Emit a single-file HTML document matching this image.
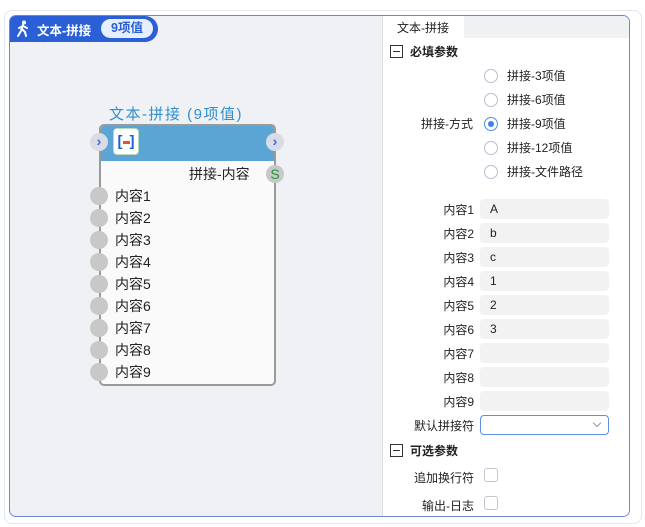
<!DOCTYPE html>
<html><head><meta charset="utf-8"><style>
*{box-sizing:border-box;margin:0;padding:0}
body{width:645px;height:527px;background:#fff;font-family:"Liberation Sans","Noto Sans CJK SC",sans-serif;position:relative;overflow:hidden;font-size:13px;color:#222}
.abs{position:absolute}
.outer{left:4px;top:10px;width:638px;height:514px;border:1px solid #e3e6f3;border-radius:8px}
.frame{left:9px;top:15px;width:621px;height:502px;border:1px solid #6d86d6;border-radius:7px;overflow:hidden;background:#f0f1f4}
.right{left:372px;top:0;width:249px;height:502px;background:#fff;border-left:1px solid #ddd}
.lbl{position:absolute;text-align:right;width:90px;font-size:12px}
.inp{position:absolute;left:97px;width:129px;height:20px;background:#f2f2f2;border-radius:4px;font-size:12px;padding-left:10px;line-height:20px}
.radio{position:absolute;left:101px;width:14px;height:14px;border:1px solid #b8bccc;border-radius:50%;background:#fff}
.rt{position:absolute;left:124px;font-size:12px}
.port{position:absolute;left:90px;width:18px;height:18px;border-radius:50%;background:#c8c8c8}
.pt{position:absolute;left:115px;font-size:14px}
</style></head><body>
<div class="abs outer"></div>
<div class="abs frame">
 <div class="abs right">
  <div class="abs" style="left:0;top:0;width:249px;height:22px;background:#f0f1f3"></div>
  <div class="abs" style="left:0;top:0;width:81px;height:22px;background:#fff;font-size:12px;padding:3px 0 0 14px">文本-拼接</div>
  <div class="abs" style="left:7px;top:29px;width:13px;height:13px;border:1px solid #333;"><div style="position:absolute;left:2px;top:5px;width:7px;height:1px;background:#333"></div></div>
  <div class="abs" style="left:27px;top:27px;font-size:12px;font-weight:bold">必填参数</div>
  <div class="radio" style="top:53px"></div><div class="rt" style="top:51px">拼接-3项值</div>
  <div class="radio" style="top:77px"></div><div class="rt" style="top:75px">拼接-6项值</div>
  <div class="radio" style="top:101px;border-color:#4a8ff0"><div style="position:absolute;left:3px;top:3px;width:6px;height:6px;border-radius:50%;background:#3b82f0"></div></div><div class="rt" style="top:99px">拼接-9项值</div>
  <div class="radio" style="top:125px"></div><div class="rt" style="top:123px">拼接-12项值</div>
  <div class="radio" style="top:149px"></div><div class="rt" style="top:147px">拼接-文件路径</div>
  <div class="lbl" style="left:0;top:99px">拼接-方式</div>
  <div class="lbl" style="left:1px;top:185px">内容1</div><div class="inp" style="top:183px">A</div>
  <div class="lbl" style="left:1px;top:209px">内容2</div><div class="inp" style="top:207px">b</div>
  <div class="lbl" style="left:1px;top:233px">内容3</div><div class="inp" style="top:231px">c</div>
  <div class="lbl" style="left:1px;top:257px">内容4</div><div class="inp" style="top:255px">1</div>
  <div class="lbl" style="left:1px;top:281px">内容5</div><div class="inp" style="top:279px">2</div>
  <div class="lbl" style="left:1px;top:305px">内容6</div><div class="inp" style="top:303px">3</div>
  <div class="lbl" style="left:1px;top:329px">内容7</div><div class="inp" style="top:327px"></div>
  <div class="lbl" style="left:1px;top:353px">内容8</div><div class="inp" style="top:351px"></div>
  <div class="lbl" style="left:1px;top:377px">内容9</div><div class="inp" style="top:375px"></div>
  <div class="lbl" style="left:1px;top:401px">默认拼接符</div>
  <div class="abs" style="left:97px;top:399px;width:129px;height:20px;border:1px solid #5b8fe8;border-radius:4px;background:#fff"><div style="position:absolute;right:8px;top:4px;width:6px;height:6px;border-right:1px solid #999;border-bottom:1px solid #999;transform:rotate(45deg)"></div></div>
  <div class="abs" style="left:7px;top:428px;width:13px;height:13px;border:1px solid #333;"><div style="position:absolute;left:2px;top:5px;width:7px;height:1px;background:#333"></div></div>
  <div class="abs" style="left:27px;top:426px;font-size:12px;font-weight:bold">可选参数</div>
  <div class="lbl" style="left:1px;top:453px">追加换行符</div>
  <div class="abs" style="left:101px;top:452px;width:14px;height:14px;border:1px solid #c4c6cf;border-radius:3px"></div>
  <div class="lbl" style="left:1px;top:481px">输出-日志</div>
  <div class="abs" style="left:101px;top:480px;width:14px;height:14px;border:1px solid #c4c6cf;border-radius:3px"></div>
 </div>
</div>
<div class="abs" style="left:10px;top:16px;width:148px;height:26px;background:#2a5fd6;border-radius:6px 14px 14px 0"></div>
<svg class="abs" style="left:15px;top:20px" width="16" height="18" viewBox="0 0 16 18"><circle cx="9" cy="2.5" r="2" fill="#fff"/><path d="M8 5 L6 11 L3 16 M7 9 L10 12 L11 16 M8 6 L12 8 M8 6 L4 8" stroke="#fff" stroke-width="2" fill="none" stroke-linecap="round"/></svg>
<div class="abs" style="left:37px;top:20px;color:#fff;font-size:12.5px;font-weight:bold">文本-拼接</div>
<div class="abs" style="left:101px;top:19px;width:52px;height:19px;background:#e6efff;border-radius:10px;color:#2a5fd6;font-size:12.5px;font-weight:bold;text-align:center;line-height:19px">9项值</div>

<div class="abs" style="left:109px;top:103px;color:#2f8fd0;font-size:15px;letter-spacing:1.5px">文本-拼接 (9项值)</div>
<div class="abs" style="left:99px;top:124px;width:177px;height:262px;background:#fafafa;border:2px solid #9a9a9a;border-radius:5px;overflow:hidden">
 <div style="height:35px;background:#5aa5d4"></div>
</div>
<div class="abs" style="left:113px;top:128px;width:26px;height:27px;background:#fff;border:1px solid #b8dcc4;border-radius:4px;color:#1e5fd4;font-weight:bold;font-size:15px;text-align:center;line-height:25px">[<span style="display:inline-block;width:7px;height:3px;background:#e8503a;vertical-align:middle"></span>]</div>
<div class="abs" style="left:90px;top:133px;width:18px;height:18px;border-radius:50%;background:#d8dce6;color:#4a5fd0;font-size:14px;text-align:center;line-height:17px;font-weight:bold">›</div>
<div class="abs" style="left:266px;top:133px;width:18px;height:18px;border-radius:50%;background:#d8dce6;color:#4a5fd0;font-size:14px;text-align:center;line-height:17px;font-weight:bold">›</div>
<div class="abs" style="left:189px;top:164px;font-size:14px">拼接-内容</div>
<div class="abs" style="left:266px;top:165px;width:18px;height:18px;border-radius:50%;background:#c8c8c8;color:#1a9a3a;font-size:14px;text-align:center;line-height:18px">S</div>
<div class="port" style="top:187px"></div><div class="pt" style="top:186px">内容1</div>
<div class="port" style="top:209px"></div><div class="pt" style="top:208px">内容2</div>
<div class="port" style="top:231px"></div><div class="pt" style="top:230px">内容3</div>
<div class="port" style="top:253px"></div><div class="pt" style="top:252px">内容4</div>
<div class="port" style="top:275px"></div><div class="pt" style="top:274px">内容5</div>
<div class="port" style="top:297px"></div><div class="pt" style="top:296px">内容6</div>
<div class="port" style="top:319px"></div><div class="pt" style="top:318px">内容7</div>
<div class="port" style="top:341px"></div><div class="pt" style="top:340px">内容8</div>
<div class="port" style="top:363px"></div><div class="pt" style="top:362px">内容9</div>
</body></html>
